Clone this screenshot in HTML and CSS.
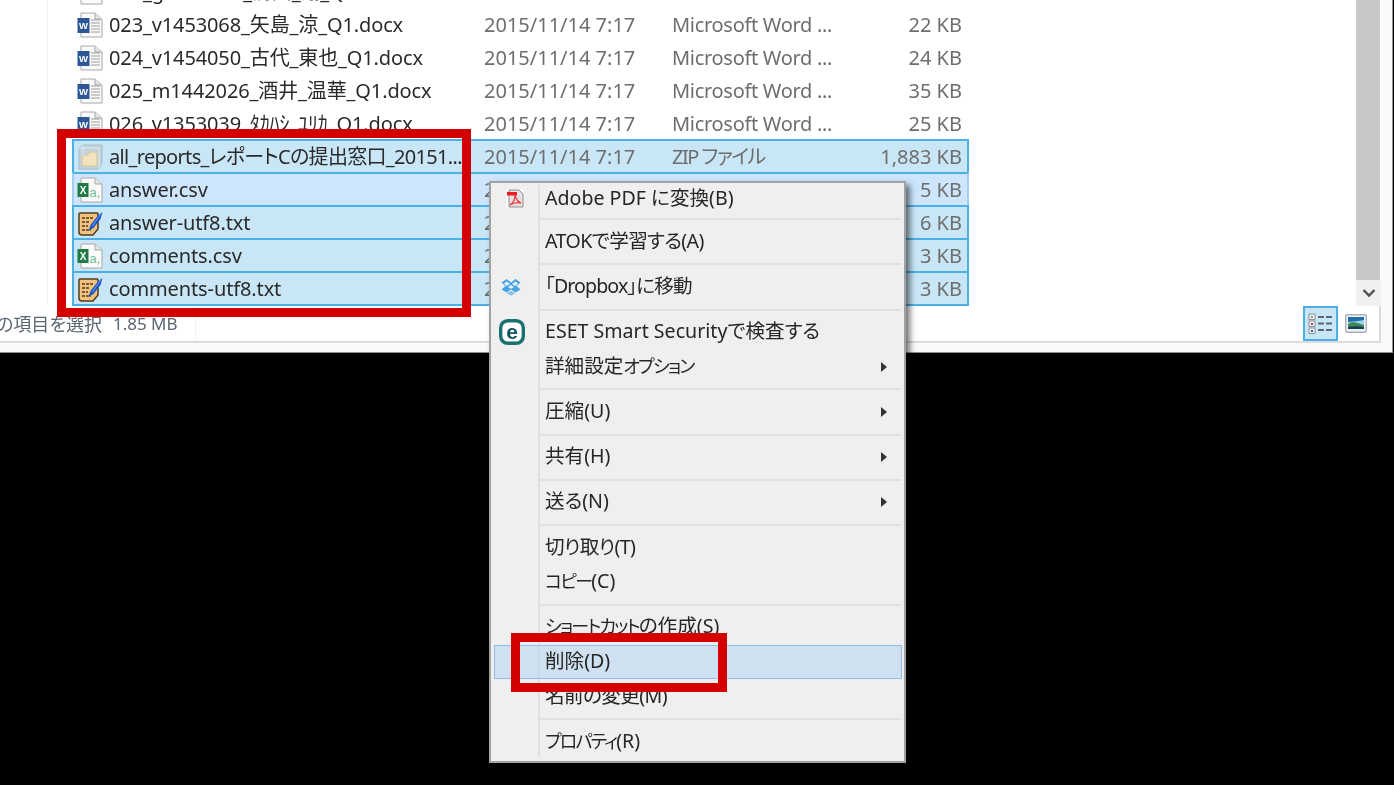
FILE: index.html
```html
<!DOCTYPE html>
<html lang="ja">
<head>
    <meta charset="UTF-8">
    <title>エクスプローラー</title>
    <link rel="stylesheet" href="styles.css">
</head>
<body>
    <svg class="defs" width="0" height="0">
        <symbol id="ico-word" viewBox="0 0 26 26">
            <path d="M4 1h14l7 6v18H4z" fill="#fafafa" stroke="#a8a8a8"/>
            <path d="M18 1v6h7" fill="#e4e4e4" stroke="#a8a8a8"/>
            <path d="M14 8h9M14 11h9M14 14h9M14 17h9M14 20h9" stroke="#9a9a9a" stroke-width="1.2"/>
            <rect x=".5" y="6" width="12" height="15" fill="#2b5797"/>
            <text x="6.500" y="17" font-size="9.500" font-weight="700" fill="#fff" text-anchor="middle" class="ico-text">W</text>
        </symbol>
        <symbol id="ico-excel" viewBox="0 0 26 26">
            <path d="M4 1h14l7 6v18H4z" fill="#fafafa" stroke="#a8a8a8"/>
            <path d="M18 1v6h7" fill="#e4e4e4" stroke="#a8a8a8"/>
            <text x="18" y="20" font-size="13" fill="#6fbb95" text-anchor="middle" class="ico-text">a,</text>
            <rect x=".5" y="6" width="11" height="14" fill="#1f7a45"/>
            <text x="6" y="17" font-size="10" font-weight="700" fill="#fff" text-anchor="middle" class="ico-text">X</text>
        </symbol>
        <symbol id="ico-note" viewBox="0 0 26 26">
            <path d="M3 3h17a1 1 0 0 1 1 1v15l-5 6H5a3 3 0 0 1-3-3V4a1 1 0 0 1 1-1z" fill="#f3c27c" stroke="#4f3c20" stroke-width="1.500"/>
            <path d="M5 8h11M5 12h8M5 16h6M5 20h9" stroke="#4f3c20" stroke-width="1.500" stroke-dasharray="3 1"/>
            <path d="M25.500 2l-2 7-7 9-5 3 2-6 7-9z" fill="#1c58c8"/>
            <path d="M23.500 4l-8 12" stroke="#6f9cee"/>
        </symbol>
        <symbol id="ico-zip" viewBox="0 0 26 26">
            <path d="M2 4l4-3h19v18l-3 6H2z" fill="#bfd2de" stroke="#a9bcc8"/>
            <path d="M6 1v19M2 4h20v21" fill="none" stroke="#dfeaf0"/>
            <path d="M5 11h6l2-3h7v14H5z" fill="#f0e3bd" stroke="#d5c596"/>
        </symbol>
    </svg>

    <div class="window">
        <div class="content">
            <div class="nav"></div>
            <div class="files">
                <div class="row">
                    <svg class="ficon"><use href="#ico-word"/></svg>
                    <span class="name">022_g1453051_前田_翔_Q1.docx</span><span class="date">2015/11/14 7:17</span><span class="type">Microsoft Word ...</span><span class="size">20 KB</span>
                </div>
                <div class="row">
                    <svg class="ficon"><use href="#ico-word"/></svg>
                    <span class="name">023_v1453068_矢島_涼_Q1.docx</span><span class="date">2015/11/14 7:17</span><span class="type">Microsoft Word ...</span><span class="size">22 KB</span>
                </div>
                <div class="row">
                    <svg class="ficon"><use href="#ico-word"/></svg>
                    <span class="name">024_v1454050_古代_東也_Q1.docx</span><span class="date">2015/11/14 7:17</span><span class="type">Microsoft Word ...</span><span class="size">24 KB</span>
                </div>
                <div class="row">
                    <svg class="ficon"><use href="#ico-word"/></svg>
                    <span class="name">025_m1442026_酒井_温華_Q1.docx</span><span class="date">2015/11/14 7:17</span><span class="type">Microsoft Word ...</span><span class="size">35 KB</span>
                </div>
                <div class="row">
                    <svg class="ficon"><use href="#ico-word"/></svg>
                    <span class="name">026_v1353039_ﾀｶﾊｼ_ﾕﾘｶ_Q1.docx</span><span class="date">2015/11/14 7:17</span><span class="type">Microsoft Word ...</span><span class="size">25 KB</span>
                </div>
                <div class="row selected">
                    <svg class="ficon"><use href="#ico-zip"/></svg>
                    <span class="name long">all_reports_レポートCの提出窓口_20151...</span><span class="date">2015/11/14 7:17</span><span class="type zip">ZIP ファイル</span><span class="size">1,883 KB</span>
                </div>
                <div class="row selected focused">
                    <svg class="ficon"><use href="#ico-excel"/></svg>
                    <span class="name">answer.csv</span><span class="date">2015/11/14 7:17</span><span></span><span class="size">5 KB</span>
                </div>
                <div class="row selected">
                    <svg class="ficon"><use href="#ico-note"/></svg>
                    <span class="name">answer-utf8.txt</span><span class="date">2015/11/14 7:17</span><span></span><span class="size">6 KB</span>
                </div>
                <div class="row selected">
                    <svg class="ficon"><use href="#ico-excel"/></svg>
                    <span class="name">comments.csv</span><span class="date">2015/11/14 7:17</span><span></span><span class="size">3 KB</span>
                </div>
                <div class="row selected">
                    <svg class="ficon"><use href="#ico-note"/></svg>
                    <span class="name">comments-utf8.txt</span><span class="date">2015/11/14 7:17</span><span></span><span class="size">3 KB</span>
                </div>
            </div>
            <div class="scrollbar">
                <div class="thumb"></div>
                <div class="arrow">
                    <svg width="14" height="10" viewBox="0 0 14 10"><path d="M1.500 2l5.500 5.500L12.500 2" fill="none" stroke="#505050" stroke-width="2.400"/></svg>
                </div>
            </div>
        </div>
        <div class="status">
            <div class="status-text"><span class="count">の項目を選択</span><span class="bytes">1.85 MB</span></div>
            <div class="view-btn active">
                <svg width="26" height="22" viewBox="0 0 26 22">
                    <rect x="1" y="1" width="6" height="5.500" fill="#eef2f4" stroke="#8a949c"/>
                    <rect x="1" y="8" width="6" height="5.500" fill="#eef2f4" stroke="#8a949c"/>
                    <rect x="1" y="15" width="6" height="5.500" fill="#eef2f4" stroke="#8a949c"/>
                    <rect x="3" y="10" width="2" height="2" fill="#d8352a"/>
                    <rect x="3" y="17" width="2" height="2" fill="#3a52b8"/>
                    <rect x="3" y="3" width="2" height="2" fill="#8d9a7a"/>
                    <path d="M10 4h6M18 4h6M10 10.500h6M18 10.500h6M10 17h6M18 17h6" stroke="#5b6770" stroke-width="1.800"/>
                </svg>
            </div>
            <div class="view-btn plain">
                <svg width="22" height="19" viewBox="0 0 22 19">
                    <rect x=".7" y=".7" width="20.600" height="17.600" rx="1.500" fill="#f1f3f5" stroke="#a9b2bc" stroke-width="1.400"/>
                    <rect x="3" y="3" width="16" height="12" fill="#9fd4ec"/>
                    <path d="M3 3h16v3l-6 1-10 1z" fill="#1f6fa8"/>
                    <path d="M3 10c4-3 8-2 16 1v4H3z" fill="#3f8a52"/>
                    <path d="M3 13c5-1 10-1 16 0v2H3z" fill="#123d5c"/>
                </svg>
            </div>
        </div>
    </div>

    <div class="menu">
        <div class="item first">
            <span class="slot">
                <svg class="shift-pdf" width="18" height="19" viewBox="0 0 18 19">
                    <rect width="18" height="19" fill="#fbfbfb"/>
                    <path d="M3 1h10l4 4v13H3z" fill="#e6e2e2" stroke="#8f8a8a"/>
                    <rect x="1" y="3" width="10" height="3.500" fill="#ed1c24"/>
                    <path d="M9 6c0 5-2 8-5 10 3-2 7-3 11-2-3-1-5-4-6-8z" fill="none" stroke="#ee3c44" stroke-width="1.300"/>
                </svg>
            </span>
            <span class="label">Adobe PDF に変換(B)</span>
        </div>
        <div class="sep"></div>
        <div class="item"><span class="slot"></span><span class="label snug">ATOKで学習する(A)</span></div>
        <div class="sep"></div>
        <div class="item">
            <span class="slot">
                <svg class="shift-drop" width="20" height="18" viewBox="0 0 20 18">
                    <path d="M5.500 1L10 4.500 14.500 1 19.500 4.500 15.500 8 19.500 11.500 14.500 14.500 10 11.500 5.500 14.500 .5 11.500 4.500 8 .5 4.500z" fill="#4aa3e2"/>
                    <path d="M5.500 3.500L9 6 5.500 8 3 5.500zM14.500 3.500L11 6l3.500 2L17 5.500zM10 7l3 2-3 1.800L7 9z" fill="#e4f3fc"/>
                    <path d="M5.500 15.500L10 12.800l4.500 2.700L10 17.500z" fill="#8ac2ea"/>
                </svg>
            </span>
            <span class="label bracket">「Dropbox」に移動</span>
        </div>
        <div class="sep"></div>
        <div class="item">
            <span class="slot">
                <svg class="shift-eset" width="26" height="26" viewBox="0 0 26 26">
                    <rect x="1.700" y="1.700" width="22.600" height="22.600" rx="7" fill="#fff" stroke="#17716f" stroke-width="3.400"/>
                    <text x="13" y="19.500" font-size="21" font-weight="700" fill="#0f5560" text-anchor="middle" class="ico-text">e</text>
                </svg>
            </span>
            <span class="label">ESET Smart Securityで検査する</span>
        </div>
        <div class="item"><span class="slot"></span><span class="label">詳細設定<span class="kana">オプション</span></span><span class="more"></span></div>
        <div class="sep"></div>
        <div class="item"><span class="slot"></span><span class="label">圧縮(U)</span><span class="more"></span></div>
        <div class="sep"></div>
        <div class="item"><span class="slot"></span><span class="label">共有(H)</span><span class="more"></span></div>
        <div class="sep"></div>
        <div class="item"><span class="slot"></span><span class="label">送る(N)</span><span class="more"></span></div>
        <div class="sep"></div>
        <div class="item"><span class="slot"></span><span class="label snug">切り取り(T)</span></div>
        <div class="item"><span class="slot"></span><span class="label"><span class="kana">コピー</span>(C)</span></div>
        <div class="sep"></div>
        <div class="item"><span class="slot"></span><span class="label"><span class="kana">ショートカット</span>の作成(S)</span></div>
        <div class="item hover"><span class="slot"></span><span class="label">削除(D)</span></div>
        <div class="item"><span class="slot"></span><span class="label snug">名前の変更(M)</span></div>
        <div class="sep"></div>
        <div class="item"><span class="slot"></span><span class="label"><span class="kana">プロパティ</span>(R)</span></div>
    </div>

    <div class="callout callout-files"></div>
    <div class="callout callout-delete"></div>
</body>
</html>
```

FILE: styles.css
```css
* {
    box-sizing: border-box;
}
html, body {
    margin: 0;
    height: 785px;
    overflow: hidden;
}
body {
    position: relative;
    background-color: #000;
    font-family: "Noto Sans", "Noto Sans CJK JP", sans-serif;
    font-feature-settings: "palt";
    font-size: 20px;
    color: #262626;
}
.defs {
    position: absolute;
}
.ico-text {
    font-family: "Liberation Sans", sans-serif;
}

/* explorer window */
.window {
    width: 1393px;
    height: 353px;
    padding: 0 11px 9px 0;
    background-color: #fafafa;
    border-right: 1px solid #8c8c8c;
    border-bottom: 1px solid #8c8c8c;
    filter: blur(0.5px);
}
.content {
    display: flex;
    height: 306px;
    background-color: #fff;
}
.nav {
    width: 48px;
    border-right: 1px solid #f3f3f3;
}
.files {
    flex: 1;
    height: 306px;
    padding-left: 24px;
    overflow: hidden;
}
.row {
    display: grid;
    grid-template-columns: 32px 375px 188px 150px 1fr;
    align-items: center;
    width: 897px;
    height: 35px;
    margin-bottom: -2px;
    padding: 0 5px 1px 3px;
    border: 2px solid transparent;
    line-height: 31px;
    white-space: nowrap;
}
.row:first-child {
    margin-top: -26px;
}
.selected {
    background-color: #c8e6f5;
    border-color: #4bb0e8;
}
.focused {
    background-color: #cde6fd;
    border-left-color: #a3ccf2;
    border-right-color: #a3ccf2;
}
.ficon {
    width: 26px;
    height: 26px;
}
.name {
    color: #2a2a2a;
    letter-spacing: -0.12px;
}
.long {
    letter-spacing: -0.68px;
}
.date, .type, .size {
    color: #6e6e6e;
}
.type {
    letter-spacing: -0.3px;
}
.zip {
    letter-spacing: -1.500px;
}
.size {
    text-align: right;
}
.scrollbar {
    display: flex;
    flex-direction: column;
    width: 25px;
}
.thumb {
    flex: 1;
    margin-right: 1px;
    background-color: #c8c8c8;
}
.arrow {
    display: flex;
    align-items: center;
    justify-content: center;
    height: 26px;
    background-color: #f0f0f0;
}
.status {
    display: flex;
    align-items: center;
    height: 37px;
    padding-right: 12px;
    background-color: #fff;
    border-right: 2px solid #dcdcdc;
    border-bottom: 2px solid #dcdcdc;
}
.status-text {
    display: flex;
    gap: 11px;
    width: 196px;
    height: 35px;
    margin-right: auto;
    border-right: 1px solid #f3f3f3;
    line-height: 36px;
    color: #5c6670;
    overflow: hidden;
}
.count {
    margin-left: -4px;
    font-size: 18px;
}
.bytes {
    font-size: 17px;
}
.view-btn {
    display: flex;
    align-items: center;
    justify-content: center;
}
.active {
    width: 35px;
    height: 35px;
    margin-right: 7px;
    background-color: #c8e6f5;
    border: 2px solid #4bb0e8;
}
.plain {
    width: 22px;
}

/* context menu */
.menu {
    position: absolute;
    left: 489px;
    top: 181px;
    width: 417px;
    height: 582px;
    padding-top: 0.5px;
    border: 2px solid #a2a2a2;
    background: linear-gradient(#e0e0e0, #e0e0e0) 47px 2px / 2px 572px no-repeat #efefef;
    box-shadow: 4px 4px 6px rgba(0, 0, 0, 0.55);
    font-size: 19.6px;
    filter: blur(0.5px);
}
.item {
    display: flex;
    align-items: center;
    height: 34.6px;
    margin: 0 2px 0 3px;
    padding-right: 14px;
    border: 1px solid transparent;
    line-height: 30px;
    white-space: nowrap;
}
.first {
    height: 30.5px;
}
.slot {
    display: flex;
    align-items: center;
    justify-content: center;
    width: 43px;
    height: 30px;
    flex: none;
}
.shift-pdf {
    margin-right: 3px;
}
.shift-drop {
    margin-right: 11px;
}
.shift-eset {
    margin-right: 9px;
}
.label {
    flex: 1;
    padding: 0 0 2px 7px;
}
.snug {
    letter-spacing: -0.6px;
}
.bracket {
    letter-spacing: -0.9px;
}
.kana {
    font-size: 18px;
    letter-spacing: -1.8px;
}
.more {
    width: 0;
    height: 0;
    border-left: 6px solid #333;
    border-top: 5px solid transparent;
    border-bottom: 5px solid transparent;
}
.sep {
    height: 2px;
    margin: 4.3px 3px 4.3px 48px;
    background-color: #e0e0e0;
}
.hover {
    background-color: rgba(175, 209, 243, 0.5);
    border-color: #91bdea;
}

/* red annotation boxes */
.callout {
    position: absolute;
    border: 9px solid #d40000;
}
.callout-files {
    left: 57px;
    top: 129px;
    width: 414px;
    height: 188px;
}
.callout-delete {
    left: 511px;
    top: 633px;
    width: 216px;
    height: 59px;
}
```
